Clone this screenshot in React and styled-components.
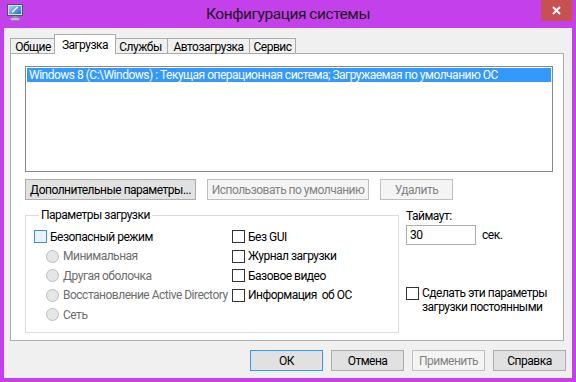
import React from 'react';
import styled, { createGlobalStyle } from 'styled-components';

const GlobalStyle = createGlobalStyle`
    html, body {
        margin: 0;
        padding: 0;
        background: #ffffff;
    }

    body {
        font-family: Roboto, "Noto Sans", sans-serif;
        font-size: 12px;
        letter-spacing: -0.5px;
        color: #000000;
    }
`;

const Window = styled.div`
    width: 576px;
    height: 382px;
    box-sizing: border-box;
    padding: 0 4px 4px 4px;
    background: #c440ea;
    display: flex;
    flex-direction: column;
`;

const TitleBar = styled.div`
    height: 28px;
    display: grid;
    grid-template-columns: 1fr auto 1fr;
    align-items: start;
`;

const TitleIcon = styled.div`
    padding: 4px 0 0 3px;
    height: 16px;
`;

const TitleText = styled.div`
    font-size: 15.5px;
    letter-spacing: -0.45px;
    line-height: 28px;
    color: #1a1a1a;
`;

const CloseButton = styled.div`
    justify-self: end;
    width: 31px;
    height: 21px;
    background: #c75050;
    display: flex;
    align-items: center;
    justify-content: center;
`;

const Client = styled.div`
    flex: 1;
    background: #f0f0f0;
    padding: 6px 6px 0 6px;
    display: flex;
    flex-direction: column;
`;

const TabStrip = styled.div`
    display: flex;
    align-items: flex-end;
    height: 20px;
    position: relative;
    z-index: 1;
`;

const Tab = styled.div`
    box-sizing: border-box;
    width: ${p => p.$w}px;
    height: ${p => (p.$active ? 20 : 16)}px;
    margin: 0 ${p => (p.$active ? -2 : 0)}px;
    border: 1px solid #acacac;
    border-left-width: ${p => (p.$first || p.$active ? 1 : 0)}px;
    border-bottom: ${p => (p.$active ? 'none' : '1px solid #acacac')};
    background: ${p => (p.$active ? '#ffffff' : '#f0f0f0')};
    display: flex;
    align-items: center;
    justify-content: center;
    padding-top: ${p => (p.$active ? 0 : 1)}px;
    z-index: ${p => (p.$active ? 2 : 0)};
`;

const Panel = styled.div`
    box-sizing: border-box;
    width: 554px;
    height: 288px;
    margin-top: -1px;
    border: 1px solid #acacac;
    background: #ffffff;
    padding: 12px 0 0 14px;
    display: flex;
    flex-direction: column;
`;

const ListBox = styled.div`
    box-sizing: border-box;
    width: 528px;
    height: 106px;
    border: 1px solid #828790;
    padding: 1px;
    background: #ffffff;
`;

const ListItem = styled.div`
    height: 14px;
    line-height: 14px;
    padding-left: 2px;
    background: ${p => (p.$selected ? '#3399ff' : 'transparent')};
    color: ${p => (p.$selected ? '#ffffff' : '#000000')};
    white-space: nowrap;
    overflow: hidden;
`;

const ButtonRow = styled.div`
    display: flex;
    gap: 11px;
    margin-top: 7px;
`;

const Button = styled.div`
    box-sizing: border-box;
    width: ${p => p.$w || 73}px;
    height: 21px;
    border: 1px solid ${p => (p.$disabled ? '#bfbfbf' : p.$default ? '#3399ff' : '#adadad')};
    background: ${p => (p.$disabled ? '#f4f4f4' : '#e1e1e1')};
    color: ${p => (p.$disabled ? '#838383' : '#000000')};
    display: flex;
    align-items: center;
    justify-content: center;
    white-space: nowrap;
`;

const Lower = styled.div`
    display: flex;
    margin-top: 8px;
`;

const GroupBox = styled.fieldset`
    box-sizing: border-box;
    width: 374px;
    height: 125px;
    margin: 0;
    padding: 4px 0 0 8px;
    border: 1px solid #dcdcdc;
    min-width: 0;
`;

const Legend = styled.legend`
    margin-left: 5px;
    padding: 0 2px;
    line-height: 15px;
`;

const GroupColumns = styled.div`
    display: grid;
    grid-template-columns: 198px 1fr;
`;

const Column = styled.div`
    display: flex;
    flex-direction: column;
`;

const OptionRow = styled.div`
    display: flex;
    align-items: center;
    height: 19.5px;
    gap: 3px;
    padding-left: ${p => (p.$indent ? 12 : 0)}px;
    color: ${p => (p.$disabled ? '#6d6d6d' : '#000000')};
    white-space: pre;
`;

const CheckBox = styled.span`
    box-sizing: border-box;
    flex: none;
    width: 13px;
    height: 13px;
    border: 1px solid ${p => (p.$focus ? '#3c8ee0' : '#333333')};
    background: ${p => (p.$focus ? '#eaf3fd' : '#ffffff')};
`;

const Radio = styled.span`
    box-sizing: border-box;
    flex: none;
    width: 13px;
    height: 13px;
    border-radius: 50%;
    border: 1px solid #bcbcbc;
    background: #e6e6e6;
    margin-right: 1px;
`;

const SidePane = styled.div`
    margin-left: 7px;
    padding-top: 1px;
    display: flex;
    flex-direction: column;
`;

const Label = styled.div`
    line-height: 14px;
`;

const TimeoutRow = styled.div`
    display: flex;
    align-items: center;
    gap: 6px;
    margin-top: 2px;
`;

const TextBox = styled.div`
    box-sizing: border-box;
    width: 70px;
    height: 20px;
    border: 1px solid #abadb3;
    background: #ffffff;
    padding-left: 3px;
    line-height: 18px;
`;

const PermanentRow = styled.div`
    display: flex;
    align-items: flex-start;
    gap: 3px;
    margin-top: 41px;
    line-height: 14px;

    ${CheckBox} {
        margin-top: 1px;
    }
`;

const Footer = styled.div`
    display: flex;
    justify-content: flex-end;
    gap: 8px;
    margin-top: 9px;
`;

function MonitorIcon() {
    return (
        <svg width="16" height="17" viewBox="0 0 16 17">
            <defs>
                <linearGradient id="scr" x1="0" y1="0" x2="1" y2="1">
                    <stop offset="0" stopColor="#9fd3ff" />
                    <stop offset="1" stopColor="#1b6fd0" />
                </linearGradient>
            </defs>
            <rect x="0.5" y="0.5" width="15" height="11" fill="#d8dde6" stroke="#4a5566" />
            <rect x="2" y="2" width="12" height="8" fill="url(#scr)" />
            <path d="M5 8.5 L10.5 3" stroke="#ffffff" strokeWidth="1.3" />
            <rect x="6" y="12" width="4" height="2" fill="#8a93a0" />
            <ellipse cx="8" cy="15" rx="5" ry="1.6" fill="#b9c0cb" stroke="#7c8592" strokeWidth="0.6" />
        </svg>
    );
}

function CloseGlyph() {
    return (
        <svg width="9" height="9" viewBox="0 0 9 9">
            <path d="M1 1 L8 8 M8 1 L1 8" stroke="#ffffff" strokeWidth="2" />
        </svg>
    );
}

const tabs = [
    { name: 'Общие', w: 46 },
    { name: 'Загрузка', w: 62, active: true },
    { name: 'Службы', w: 54 },
    { name: 'Автозагрузка', w: 82 },
    { name: 'Сервис', w: 46 },
];

const safeModes = ['Минимальная', 'Другая оболочка', 'Восстановление Active Directory', 'Сеть'];
const extras = ['Без GUI', 'Журнал загрузки', 'Базовое видео', 'Информация  об ОС'];

export default function App() {
    return (
        <>
            <GlobalStyle />
            <Window>
                <TitleBar>
                    <TitleIcon><MonitorIcon /></TitleIcon>
                    <TitleText>Конфигурация системы</TitleText>
                    <CloseButton><CloseGlyph /></CloseButton>
                </TitleBar>
                <Client>
                    <TabStrip>
                        {tabs.map((t, i) => (
                            <Tab key={t.name} $w={t.w} $active={t.active} $first={i === 0}>{t.name}</Tab>
                        ))}
                    </TabStrip>
                    <Panel>
                        <ListBox>
                            <ListItem $selected>
                                Windows 8 (C:\Windows) : Текущая операционная система; Загружаемая по умолчанию ОС
                            </ListItem>
                        </ListBox>
                        <ButtonRow>
                            <Button $w={171}>Дополнительные параметры...</Button>
                            <Button $w={162} $disabled>Использовать по умолчанию</Button>
                            <Button $w={73} $disabled>Удалить</Button>
                        </ButtonRow>
                        <Lower>
                            <GroupBox>
                                <Legend>Параметры загрузки</Legend>
                                <GroupColumns>
                                    <Column>
                                        <OptionRow>
                                            <CheckBox $focus />
                                            Безопасный режим
                                        </OptionRow>
                                        {safeModes.map(m => (
                                            <OptionRow key={m} $indent $disabled>
                                                <Radio />
                                                {m}
                                            </OptionRow>
                                        ))}
                                    </Column>
                                    <Column>
                                        {extras.map(e => (
                                            <OptionRow key={e}>
                                                <CheckBox />
                                                {e}
                                            </OptionRow>
                                        ))}
                                    </Column>
                                </GroupColumns>
                            </GroupBox>
                            <SidePane>
                                <Label>Таймаут:</Label>
                                <TimeoutRow>
                                    <TextBox>30</TextBox>
                                    <span>сек.</span>
                                </TimeoutRow>
                                <PermanentRow>
                                    <CheckBox />
                                    <div>Сделать эти параметры<br />загрузки постоянными</div>
                                </PermanentRow>
                            </SidePane>
                        </Lower>
                    </Panel>
                    <Footer>
                        <Button $default>ОК</Button>
                        <Button>Отмена</Button>
                        <Button $disabled>Применить</Button>
                        <Button>Справка</Button>
                    </Footer>
                </Client>
            </Window>
        </>
    );
}
